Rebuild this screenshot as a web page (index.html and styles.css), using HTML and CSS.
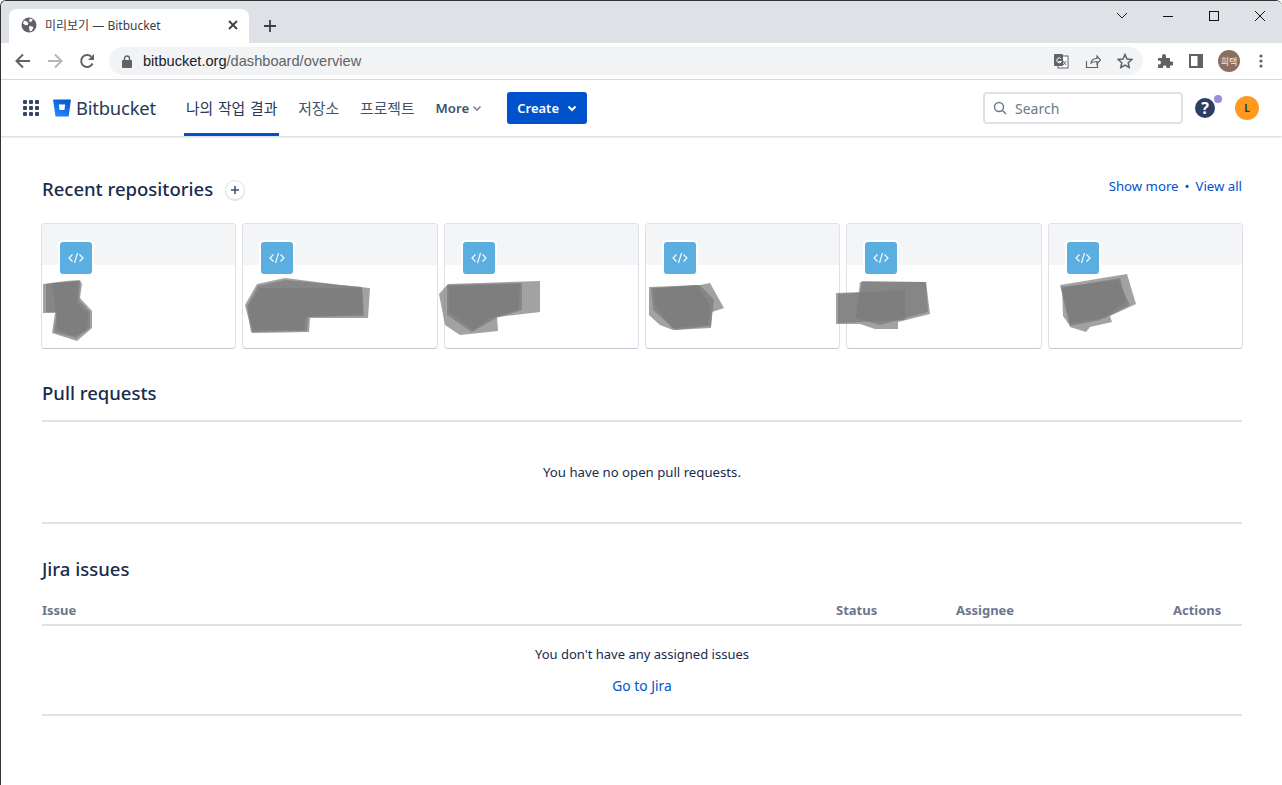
FILE: index.html

```html
<!DOCTYPE html>
<html>
	<head>
		<meta http-equiv="Content-Type" content="text/html; charset=utf-8" />
		<title>미리보기 — Bitbucket</title>
		<link rel="stylesheet" href="styles.css">
	</head>
	<body>
		<div class="window">
			<!-- browser tab strip -->
			<div class="tabstrip">
				<div class="tab">
					<svg class="favicon" width="16" height="16" viewBox="0 0 16 16"><circle cx="8" cy="8" r="7.5" fill="#5f6368"/><path d="M3 3.5l3 1 1.5 2-1 1.5-2 .3L2 6.5zM9 1.5l2.8 1-1 2-2 .6-.8-1.6zM8 9l3.5.5 1 1.5-2 3-1.6.3-.6-2.300z" fill="#fff"/></svg>
					<span class="tab-title">미리보기 — Bitbucket</span>
					<svg class="tab-close" width="10" height="10" viewBox="0 0 10 10"><path d="M1 1l8 8M9 1l-8 8" stroke="#3c4043" stroke-width="1.800"/></svg>
				</div>
				<svg class="newtab" width="12" height="12" viewBox="0 0 12 12"><path d="M6 0v12M0 6h12" stroke="#3c4043" stroke-width="1.800"/></svg>
				<div class="winctl">
					<svg width="46" height="30" viewBox="0 0 46 30"><path d="M18 12l5 5 5-5" fill="none" stroke="#222" stroke-width="1"/></svg>
					<svg width="46" height="30" viewBox="0 0 46 30"><path d="M18 15.500h10" stroke="#111" stroke-width="1"/></svg>
					<svg width="46" height="30" viewBox="0 0 46 30"><rect x="18.500" y="10.500" width="9" height="9" fill="none" stroke="#111" stroke-width="1"/></svg>
					<svg width="46" height="30" viewBox="0 0 46 30"><path d="M18 10l10 10M28 10l-10 10" stroke="#111" stroke-width="1"/></svg>
				</div>
			</div>

			<!-- browser toolbar -->
			<div class="toolbar">
				<svg class="tool" width="16" height="16" viewBox="0 0 16 16"><path d="M15 8H2M8 1.500L1.500 8 8 14.500" fill="none" stroke="#5f6368" stroke-width="2"/></svg>
				<svg class="tool" width="16" height="16" viewBox="0 0 16 16"><path d="M1 8h13M8 1.500L14.500 8 8 14.500" fill="none" stroke="#b4b6b9" stroke-width="2"/></svg>
				<svg class="tool" width="16" height="16" viewBox="0 0 16 16"><path d="M13.600 10.500A6 6 0 1 1 12.300 3.700" fill="none" stroke="#5f6368" stroke-width="2"/><path d="M15 1v6H9z" fill="#5f6368"/></svg>
				<div class="omnibox">
					<svg width="10" height="13" viewBox="0 0 10 13"><rect y="5" width="10" height="8" rx="1" fill="#5f6368"/><path d="M2.500 6V3.500a2.500 2.500 0 0 1 5 0V6" fill="none" stroke="#5f6368" stroke-width="1.400"/></svg>
					<span class="url"><b>bitbucket.org</b>/dashboard/overview</span>
					<div class="omni-icons">
						<svg width="16" height="16" viewBox="0 0 16 16"><rect x="5" y="3" width="10" height="12" fill="#fff" stroke="#5f6368"/><rect x="1" y="1" width="9" height="12" rx="1" fill="#5f6368"/><path d="M8 5.500a2.500 2.500 0 1 0 .5 3H5.500" fill="none" stroke="#fff"/><path d="M10 8l3 4M13 8l-3 4" stroke="#5f6368"/></svg>
						<svg width="16" height="16" viewBox="0 0 16 16"><path d="M1.500 8v6.500h11V11M6 10c.5-3 3-4.500 6-4.500V3l3.500 4-3.500 4V8.500c-2.500 0-4.500.3-6 1.500z" fill="none" stroke="#5f6368" stroke-width="1.200"/></svg>
						<svg width="16" height="16" viewBox="0 0 16 16"><path d="M8 1.500l2 4.500 4.800.5-3.600 3.200 1 4.800L8 12l-4.200 2.500 1-4.800-3.600-3.200L6 6z" fill="none" stroke="#5f6368" stroke-width="1.500"/></svg>
					</div>
				</div>
				<div class="tool-right">
					<svg width="16" height="16" viewBox="0 0 16 16"><path d="M1 5h4V3a2 2 0 0 1 4 0v2h4v3.500h1.500a2 2 0 0 1 0 4H13V15H9.500v-1a1.800 1.800 0 0 0-3.500 0v1H1v-3.500h1a2 2 0 0 0 0-4H1z" fill="#5f6368"/></svg>
					<svg width="14" height="14" viewBox="0 0 14 14"><path d="M0 0h14v14H0z" fill="#5f6368"/><rect x="2" y="2" width="6.500" height="10" fill="#fff"/></svg>
					<span class="profile">희택</span>
					<svg width="4" height="14" viewBox="0 0 4 14"><circle cx="2" cy="2" r="1.600" fill="#5f6368"/><circle cx="2" cy="7" r="1.600" fill="#5f6368"/><circle cx="2" cy="12" r="1.600" fill="#5f6368"/></svg>
				</div>
			</div>

			<!-- bitbucket header -->
			<div class="appbar">
				<div class="waffle">
					<i></i><i></i><i></i><i></i><i></i><i></i><i></i><i></i><i></i>
				</div>
				<svg class="logo" width="18" height="18" viewBox="0 0 18 18"><defs><linearGradient id="bb" x1="1" y1="0" x2="0.400" y2="1"><stop offset="0" stop-color="#0052cc"/><stop offset="1" stop-color="#2684ff"/></linearGradient></defs><path d="M.6 .6h16.800a.5 .5 0 0 1 .5 .6L15.700 17a.6 .6 0 0 1-.6 .5H3a.6 .6 0 0 1-.6-.5L.1 1.200a.5 .5 0 0 1 .5-.6z" fill="url(#bb)"/><path d="M5.800 5.500h6.400l-.8 5.500H6.600z" fill="#fff"/></svg>
				<span class="brand">Bitbucket</span>
				<nav class="nav">
					<a class="nav-item active" href="#">나의 작업 결과</a>
					<a class="nav-item" href="#">저장소</a>
					<a class="nav-item" href="#">프로젝트</a>
					<a class="nav-item more" href="#">More <svg width="10" height="10" viewBox="0 0 10 10"><path d="M1.500 3.500L5 7l3.500-3.500" fill="none" stroke="#7a869a" stroke-width="1.600"/></svg></a>
				</nav>
				<button class="create">Create <svg width="10" height="10" viewBox="0 0 10 10"><path d="M1.500 3.500L5 7l3.500-3.500" fill="none" stroke="#fff" stroke-width="2"/></svg></button>
				<div class="appbar-right">
					<div class="search">
						<svg width="14" height="14" viewBox="0 0 14 14"><circle cx="6" cy="6" r="4.500" fill="none" stroke="#6b778c" stroke-width="1.400"/><path d="M9.500 9.500L13 13" stroke="#6b778c" stroke-width="1.400"/></svg>
						<span>Search</span>
					</div>
					<div class="help">?<i class="help-dot"></i></div>
					<div class="user">L</div>
				</div>
			</div>

			<div class="content">
				<div class="repo-head">
					<h2>Recent repositories</h2>
					<span class="add">
						<svg width="8" height="8" viewBox="0 0 8 8"><path d="M4 0v8M0 4h8" stroke="#42526e" stroke-width="1.600"/></svg>
					</span>
					<div class="repo-links"><a href="#">Show more</a><span class="sep">•</span><a href="#">View all</a></div>
				</div>
				<div class="cards">
					<div class="card"><div class="band"></div><div class="repo-icon"><svg width="16" height="12" viewBox="0 0 16 12"><path d="M4.500 2.500L1 6l3.500 3.500M11.500 2.500L15 6l-3.500 3.500M9.500 1L6.500 11" fill="none" stroke="#fff" stroke-width="1.100"/></svg></div></div>
					<div class="card"><div class="band"></div><div class="repo-icon"><svg width="16" height="12" viewBox="0 0 16 12"><path d="M4.500 2.500L1 6l3.500 3.500M11.500 2.500L15 6l-3.500 3.500M9.500 1L6.500 11" fill="none" stroke="#fff" stroke-width="1.100"/></svg></div></div>
					<div class="card"><div class="band"></div><div class="repo-icon"><svg width="16" height="12" viewBox="0 0 16 12"><path d="M4.500 2.500L1 6l3.500 3.500M11.500 2.500L15 6l-3.500 3.500M9.500 1L6.500 11" fill="none" stroke="#fff" stroke-width="1.100"/></svg></div></div>
					<div class="card"><div class="band"></div><div class="repo-icon"><svg width="16" height="12" viewBox="0 0 16 12"><path d="M4.500 2.500L1 6l3.500 3.500M11.500 2.500L15 6l-3.500 3.500M9.500 1L6.500 11" fill="none" stroke="#fff" stroke-width="1.100"/></svg></div></div>
					<div class="card"><div class="band"></div><div class="repo-icon"><svg width="16" height="12" viewBox="0 0 16 12"><path d="M4.500 2.500L1 6l3.500 3.500M11.500 2.500L15 6l-3.500 3.500M9.500 1L6.500 11" fill="none" stroke="#fff" stroke-width="1.100"/></svg></div></div>
					<div class="card"><div class="band"></div><div class="repo-icon"><svg width="16" height="12" viewBox="0 0 16 12"><path d="M4.500 2.500L1 6l3.500 3.500M11.500 2.500L15 6l-3.500 3.500M9.500 1L6.500 11" fill="none" stroke="#fff" stroke-width="1.100"/></svg></div></div>
				</div>

				<h2 class="pr-title">Pull requests</h2>
				<p class="pr-empty">You have no open pull requests.</p>

				<h2 class="jira-title">Jira issues</h2>
				<div class="jira-head">
					<span class="col-issue">Issue</span>
					<span class="col-status">Status</span>
					<span class="col-assignee">Assignee</span>
					<span class="col-actions">Actions</span>
				</div>
				<div class="jira-empty">
					<p>You don't have any assigned issues</p>
					<a href="#">Go to Jira</a>
				</div>
			</div>

			<!-- scribbled-over repo names, drawn on top of the cards -->
			<svg class="scribble" width="1282" height="785" viewBox="0 0 1282 785">
				<g fill="#7a7a7a" fill-opacity="0.7">
					<polygon points="43,284 66,281 80,280 82,284 80,298 92,311 92,328 77,341 52,333 55,313 43,313"/>
					<polygon points="46,284 80,281 79,300 90,312 90,328 76,338 54,332 57,312 46,312"/>
					<polygon points="52,283 78,281 77,303 88,314 87,330 74,336 58,330"/>

					<polygon points="257,284 285,278 341,285 370,288 368,318 310,318 309,332 252,333 245,305"/>
					<polygon points="258,286 285,280 362,287 364,316 308,317 307,331 251,332 247,306"/>
					<polygon points="260,288 362,288 363,314 305,317 304,330 253,330 248,306"/>

					<polygon points="439,294 448,284 540,281 540,312 497,317 498,331 460,335 445,325"/>
					<polygon points="447,285 522,283 522,310 496,318 472,332 447,315"/>
					<polygon points="449,286 520,284 518,310 490,318 474,330 449,312"/>

					<polygon points="649,287 700,285 710,283 724,308 712,312 711,328 673,330 660,325 649,315"/>
					<polygon points="651,288 700,285 714,300 711,326 675,330 653,310"/>
					<polygon points="654,289 697,285 710,305 708,325 672,328 655,305"/>

					<polygon points="836,293 860,292 862,281 926,282 930,314 898,322 898,329 875,329 860,324 836,324"/>
					<polygon points="860,282 926,282 928,312 880,325 856,318"/>
					<polygon points="838,294 905,290 905,320 838,323"/>

					<polygon points="1060,285 1127,274 1136,304 1110,316 1112,322 1090,327 1086,332 1070,327"/>
					<polygon points="1061,287 1118,280 1130,305 1105,318 1070,323"/>
					<polygon points="1062,288 1120,278 1126,302 1100,320 1070,326 1063,316"/>
				</g>
			</svg>
		</div>
	</body>
</html>
```

FILE: styles.css

```css
* {box-sizing:border-box;}
html, body {margin:0;padding:0;background:#fff;}
body {font-family:"Noto Sans", "Noto Sans CJK KR", sans-serif;color:#172b4d;overflow:hidden;}
h2, p {margin:0;}
a {text-decoration:none;color:#0052cc;}

.window {position:relative;width:1282px;height:785px;border-left:1px solid #333;border-top:1px solid #333;border-radius:6px 6px 0 0;overflow:hidden;}

/* browser chrome */
.tabstrip {height:42px;background:#dee1e6;display:flex;align-items:flex-end;padding-left:8px;}
.tab {width:240px;height:34px;background:#fff;border-radius:8px 8px 0 0;display:flex;align-items:center;padding:0 11px 2px 12px;}
.tab-title {font:12px "Noto Sans", "Noto Sans CJK KR", sans-serif;color:#3c4043;margin-left:8px;flex:1;}
.newtab {margin:0 0 11px 15px;}
.winctl {margin-left:auto;margin-right:-1px;align-self:flex-start;display:flex;}
.winctl svg {display:block;}
.toolbar {height:37px;background:#fff;border-bottom:1px solid #dadce0;display:flex;align-items:center;padding-left:14px;}
.tool {margin-right:16px;}
.omnibox {width:1034px;height:28px;margin-left:-2px;background:#f1f3f4;border-radius:14px;display:flex;align-items:center;padding-left:13px;padding-right:10px;}
.url {font:14.6px "Liberation Sans", sans-serif;color:#5f6368;margin-left:11px;}
.url b {font-weight:normal;color:#202124;}
.omni-icons {margin-left:auto;display:flex;gap:16px;}
.tool-right {display:flex;align-items:center;margin-left:14px;}
.tool-right svg:first-child {margin-right:16px;}
.profile {width:22px;height:22px;border-radius:50%;background:#8d6e63;color:#f3e9e5;font-size:9px;display:flex;align-items:center;justify-content:center;margin:0 19px 0 15px;}

/* bitbucket header */
.appbar {height:56px;background:#fff;box-shadow:0 1px 2px rgba(9,30,66,.2);display:flex;align-items:center;padding-left:22px;position:relative;}
.waffle {display:grid;grid-template-columns:repeat(3,4px);gap:2px;width:16px;}
.waffle i {display:block;width:4px;height:4px;background:#344563;border-radius:1px;}
.logo {margin-left:14px;}
.brand {font-size:18.4px;color:#253858;margin-left:5px;letter-spacing:-.2px;margin-bottom:1px;}
.nav {display:flex;align-self:stretch;margin-left:28px;}
.nav-item {color:#42526e;font-size:14.8px;word-spacing:1px;display:flex;align-items:center;padding:0 2px 2px;margin-right:17px;border-bottom:3px solid transparent;border-top:3px solid transparent;white-space:nowrap;}
.nav-item.active {color:#253858;border-bottom-color:#0052cc;}
.nav-item.more {font-weight:600;font-size:13.2px;word-spacing:0;margin-right:0;padding-bottom:0;}
.nav-item.more svg {margin-left:3px;}
.create {width:80px;height:32px;margin-left:23px;background:#0052cc;color:#fff;border:0;border-radius:3px;font:600 13px "Noto Sans", sans-serif;display:flex;align-items:center;justify-content:center;gap:8px;}
.appbar-right {margin-left:auto;display:flex;align-items:center;padding-right:23px;}
.search {width:200px;height:32px;border:2px solid #dfe1e6;border-radius:4px;display:flex;align-items:center;padding-left:8px;gap:8px;font-size:14px;color:#6b778c;}
.help {position:relative;width:20px;height:20px;margin-left:12px;border-radius:50%;background:#2c3e63;color:#fff;font-size:16px;font-weight:700;line-height:20px;text-align:center;}
.help-dot {position:absolute;right:-7px;top:-3px;width:8px;height:8px;border-radius:50%;background:#998dd9;}
.user {width:24px;height:24px;margin-left:20px;border-radius:50%;background:#ff991f;color:#253858;font-size:10px;font-weight:700;line-height:24px;text-align:center;}

/* dashboard */
.content {padding:40px 40px 0 41px;}
h2 {font-size:18.5px;font-weight:500;color:#172b4d;line-height:26px;}
.repo-head {display:flex;align-items:center;height:26px;}
.add {width:20px;height:20px;margin-left:12px;margin-top:1px;border-radius:50%;border:1px solid #dfe1e6;box-shadow:0 1px 1px rgba(9,30,66,.15);display:flex;align-items:center;justify-content:center;}
.repo-links {margin-left:auto;margin-top:-6px;font-size:13.2px;display:flex;gap:6px;}
.sep {color:#0052cc;}
.cards {display:grid;grid-template-columns:repeat(6,1fr);gap:6px;margin:21px -1px 0;}
.card {position:relative;height:126px;background:#fff;border:1px solid #dfe1e6;border-bottom-color:#c1c7d0;border-radius:4px;overflow:hidden;}
.band {height:41px;background:#f4f5f7;}
.repo-icon {position:absolute;left:16px;top:16px;width:36px;height:36px;border:2px solid #fff;border-radius:5px;background:#5aafe0;display:flex;align-items:center;justify-content:center;}

.pr-title {margin-top:31px;padding-bottom:14px;border-bottom:2px solid #dfe1e6;}
.pr-empty {font-size:13.2px;text-align:center;height:102px;line-height:18px;padding-top:41px;border-bottom:2px solid #dfe1e6;}
.jira-title {margin-top:32px;}
.jira-head {display:flex;margin-top:19px;font-size:13px;font-weight:700;color:#6b778c;height:25px;border-bottom:2px solid #dfe1e6;}
.col-issue {width:794px;}
.col-status {width:120px;}
.col-assignee {width:178px;}
.col-actions {width:108px;padding-left:39px;}
.jira-empty {height:90px;border-bottom:2px solid #dfe1e6;text-align:center;font-size:13px;padding-top:19px;}
.jira-empty p {line-height:18px;margin-bottom:14px;}
.jira-empty a {display:block;line-height:18px;font-size:13.8px;}

.scribble {position:absolute;left:-1px;top:-1px;pointer-events:none;}
```
